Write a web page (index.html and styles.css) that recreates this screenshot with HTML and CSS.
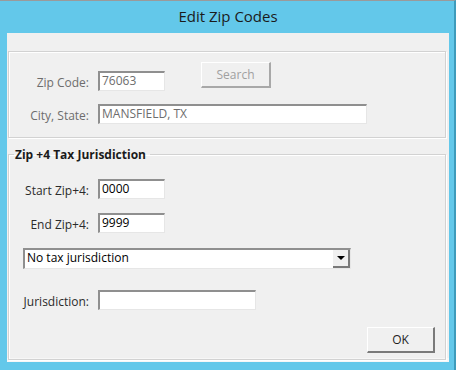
FILE: index.html
```html
<!DOCTYPE html>
<html lang="en">
  <head>
    <title>Edit Zip Codes</title>
    <meta name="viewport" content="width=device-width, initial-scale=1.0">
    <link rel="stylesheet" href="styles.css">
  </head>
  <body>
    <div class="window">
      <div class="titlebar">Edit Zip Codes</div>
      <div class="client">
        <div class="group top-group">
          <div class="row row-zip">
            <label class="lbl lbl-off">Zip Code:</label>
            <div class="textbox tb-zip tb-off">76063</div>
            <button class="btn btn-search" disabled>Search</button>
          </div>
          <div class="row row-city">
            <label class="lbl lbl-off">City, State:</label>
            <div class="textbox tb-city tb-off">MANSFIELD, TX</div>
          </div>
        </div>
        <fieldset class="group tax-group">
          <legend>Zip +4 Tax Jurisdiction</legend>
          <div class="row row-start">
            <label class="lbl">Start Zip+4:</label>
            <div class="textbox tb-short">0000</div>
          </div>
          <div class="row row-end">
            <label class="lbl">End Zip+4:</label>
            <div class="textbox tb-short">9999</div>
          </div>
          <div class="combo">
            <span class="combo-text">No tax jurisdiction</span>
            <span class="combo-arrow"><span class="tri"></span></span>
          </div>
          <div class="row row-jur">
            <label class="lbl">Jurisdiction:</label>
            <div class="textbox tb-jur"></div>
          </div>
          <div class="footer">
            <button class="btn btn-ok">OK</button>
          </div>
        </fieldset>
      </div>
    </div>
  </body>
</html>
```

FILE: styles.css
```css
* {
  box-sizing: border-box;
}
body {
  margin: 0;
  background-color: #fff;
  font-family: "Segoe UI", "Open Sans", "Noto Sans", sans-serif;
  font-size: 12px;
  color: #1e1e1e;
}
.window {
  width: 456px;
  height: 370px;
  background-color: #63c8ea;
  border-top: 1px solid #9a9a9a;
  border-right: 2px solid #3e9bbb;
  padding: 0 5px 0 7px;
}
.titlebar {
  height: 32px;
  line-height: 30px;
  text-align: center;
  font-size: 15px;
  color: #1b1b1b;
}
.client {
  height: 329px;
  background-color: #f0f0f0;
  padding: 18px 3px 0 1px;
  border-bottom: 4px solid #f7f7f7;
}
.group {
  border: 1px solid #d2d2d2;
  box-shadow: inset 1px 1px #fff, 1px 1px #fff;
}
.top-group {
  height: 87px;
  padding-top: 10px;
}
.row {
  display: flex;
  align-items: flex-start;
}
.lbl {
  flex-shrink: 0;
  width: 80px;
  height: 20px;
  text-align: right;
  padding-top: 4px;
  line-height: 16px;
  margin-right: 9px;
  color: #2b2b2b;
}
.lbl-off {
  color: #6d6d6d;
}
.row-zip .lbl {
  margin-top: 9px;
}
.textbox {
  height: 20px;
  background-color: #fff;
  border-style: solid;
  border-width: 2px 1px 1px 2px;
  border-color: #8f8f8f #e6e6e6 #e6e6e6 #8f8f8f;
  padding: 0 2px;
  line-height: 16px;
  color: #000;
}
.tb-off {
  color: #6d6d6d;
}
.tb-zip {
  width: 67px;
  margin-top: 9px;
}
.tb-city {
  width: 269px;
}
.row-city {
  margin-top: 13px;
}
.btn {
  font-family: inherit;
  font-size: 12px;
  background-color: #f0f0f0;
  border-style: solid;
  border-width: 1px 2px 2px 1px;
  border-color: #fff #7a7a7a #7a7a7a #fff;
  padding: 0;
  color: #1e1e1e;
}
.btn-search {
  width: 70px;
  height: 26px;
  margin-left: 36px;
  color: #a0a0a0;
  border-color: #fff #a8a8a8 #a8a8a8 #fff;
}
.tax-group {
  margin: 8px 0 0;
  padding: 16px 0 0;
  min-width: 0;
  height: 214px;
}
.tax-group legend {
  font-weight: bold;
  padding: 0 4px 0 1px;
  margin-left: 5px;
  color: #1b1b1b;
}
.row-end {
  margin-top: 14px;
}
.tb-short {
  width: 67px;
}
.combo {
  display: flex;
  width: 328px;
  height: 21px;
  margin: 15px 0 0 14px;
  background-color: #fff;
  border-style: solid;
  border-width: 2px 1px 1px 2px;
  border-color: #8f8f8f #e6e6e6 #e6e6e6 #8f8f8f;
}
.combo-text {
  flex: 1;
  padding-left: 2px;
  line-height: 16px;
  color: #000;
}
.combo-arrow {
  width: 17px;
  display: flex;
  align-items: center;
  justify-content: center;
  background-color: #f0f0f0;
  border-style: solid;
  border-width: 0 2px 2px 0;
  border-color: #7a7a7a;
}
.tri {
  width: 0;
  height: 0;
  border-left: 4px solid transparent;
  border-right: 4px solid transparent;
  border-top: 4px solid #000;
}
.row-jur {
  margin-top: 21px;
}
.tb-jur {
  width: 158px;
}
.footer {
  display: flex;
  justify-content: flex-end;
  margin-top: 17px;
  padding-right: 10px;
}
.btn-ok {
  width: 68px;
  height: 26px;
}
```
